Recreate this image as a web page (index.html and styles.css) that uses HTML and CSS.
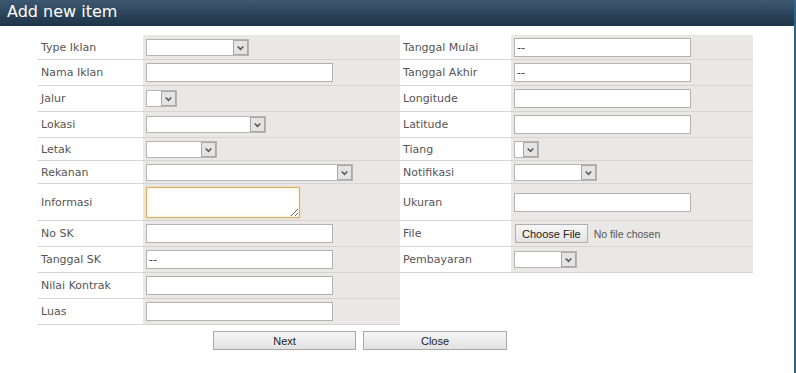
FILE: index.html
```html
<!DOCTYPE html>
<html lang="id">
<head>
  <meta charset="UTF-8">
  <meta name="viewport" content="width=device-width, initial-scale=1.0">
  <title>Add new item</title>
  <link rel="stylesheet" href="styles.css">
</head>
<body>
  <div class="dialog">
    <header class="title-bar">Add new item</header>

    <form class="form-grid">
      <div class="label">Type Iklan</div>
      <div class="field"><span class="select w103"><select></select><span class="arrow"><svg viewBox="0 0 14 14"><path d="M4 6 L7 9 L10 6"/></svg></span></span></div>
      <div class="label">Tanggal Mulai</div>
      <div class="field"><input type="text" class="text short" value="--"></div>

      <div class="label">Nama Iklan</div>
      <div class="field"><input type="text" class="text"></div>
      <div class="label">Tanggal Akhir</div>
      <div class="field"><input type="text" class="text short" value="--"></div>

      <div class="label">Jalur</div>
      <div class="field"><span class="select w31"><select></select><span class="arrow"><svg viewBox="0 0 14 14"><path d="M4 6 L7 9 L10 6"/></svg></span></span></div>
      <div class="label">Longitude</div>
      <div class="field"><input type="text" class="text short"></div>

      <div class="label">Lokasi</div>
      <div class="field"><span class="select w120"><select></select><span class="arrow"><svg viewBox="0 0 14 14"><path d="M4 6 L7 9 L10 6"/></svg></span></span></div>
      <div class="label">Latitude</div>
      <div class="field"><input type="text" class="text short"></div>

      <div class="label">Letak</div>
      <div class="field"><span class="select w71"><select></select><span class="arrow"><svg viewBox="0 0 14 14"><path d="M4 6 L7 9 L10 6"/></svg></span></span></div>
      <div class="label">Tiang</div>
      <div class="field"><span class="select w25"><select></select><span class="arrow"><svg viewBox="0 0 14 14"><path d="M4 6 L7 9 L10 6"/></svg></span></span></div>

      <div class="label">Rekanan</div>
      <div class="field"><span class="select w207"><select></select><span class="arrow"><svg viewBox="0 0 14 14"><path d="M4 6 L7 9 L10 6"/></svg></span></span></div>
      <div class="label">Notifikasi</div>
      <div class="field"><span class="select w83"><select></select><span class="arrow"><svg viewBox="0 0 14 14"><path d="M4 6 L7 9 L10 6"/></svg></span></span></div>

      <div class="label">Informasi</div>
      <div class="field"><textarea class="note"></textarea></div>
      <div class="label">Ukuran</div>
      <div class="field"><input type="text" class="text short"></div>

      <div class="label">No SK</div>
      <div class="field"><input type="text" class="text"></div>
      <div class="label">File</div>
      <div class="field"><input type="file" class="file"></div>

      <div class="label">Tanggal SK</div>
      <div class="field"><input type="text" class="text" value="--"></div>
      <div class="label">Pembayaran</div>
      <div class="field"><span class="select w63"><select></select><span class="arrow"><svg viewBox="0 0 14 14"><path d="M4 6 L7 9 L10 6"/></svg></span></span></div>

      <div class="label">Nilai Kontrak</div>
      <div class="field"><input type="text" class="text"></div>
      <div class="blank"></div>
      <div class="blank"></div>

      <div class="label">Luas</div>
      <div class="field"><input type="text" class="text"></div>
      <div class="blank"></div>
      <div class="blank"></div>
    </form>

    <div class="actions">
      <button type="button" class="btn">Next</button>
      <button type="button" class="btn">Close</button>
    </div>
  </div>
</body>
</html>
```

FILE: styles.css
```css
body {
  margin: 0;
  padding: 0;
  background-color: #ffffff;
  font-family: 'DejaVu Sans', Verdana, sans-serif;
  font-size: 11px;
  color: #555555;
}
.dialog {
  width: 796px;
  height: 373px;
  box-sizing: border-box;
  border-right: 2px solid #2c6787;
  overflow: hidden;
}
.title-bar {
  height: 26px;
  line-height: 24px;
  padding-left: 7px;
  background: linear-gradient(#3e586f, #1d3448);
  color: #ffffff;
  font-size: 16px;
}
.form-grid {
  display: grid;
  grid-template-columns: 105px 257px 111px 242px;
  grid-template-rows: 25px 26px 26px 26px 23px 23px 37px 26px 26px 26px 26px;
  width: 715px;
  margin: 9px 0 0 38px;
}
.label,
.field {
  display: flex;
  align-items: center;
  box-sizing: border-box;
  padding-left: 3px;
  border-bottom: 1px solid #d5d5d5;
}
.field {
  background-color: #e9e8e6;
}
.text {
  width: 187px;
  height: 19px;
  box-sizing: border-box;
  margin: 0;
  padding: 0 2px;
  border: 1px solid #b2b2b2;
  background: #ffffff;
  font-family: inherit;
  font-size: 11px;
  color: #333;
}
.text.short {
  width: 177px;
}
.select {
  position: relative;
  display: inline-block;
  height: 17px;
}
.select select {
  width: 100%;
  height: 17px;
  margin: 0;
  padding: 0;
  border: 1px solid #b5b5b5;
  background: #ffffff;
  appearance: none;
  -webkit-appearance: none;
}
.select .arrow {
  position: absolute;
  top: 1px;
  right: 1px;
  width: 13px;
  height: 13px;
  background: #e4e4e4;
  border: 1px solid #a9a9a9;
}
.select svg {
  display: block;
  width: 13px;
  height: 13px;
  fill: none;
  stroke: #555;
  stroke-width: 1.6;
}
.w25 { width: 25px; }
.w31 { width: 31px; }
.w63 { width: 63px; }
.w71 { width: 71px; }
.w83 { width: 83px; }
.w103 { width: 103px; }
.w120 { width: 120px; }
.w207 { width: 207px; }
.note {
  width: 154px;
  height: 31px;
  box-sizing: border-box;
  margin: 0;
  border: 1px solid #d8b066;
  box-shadow: 0 0 2px #f0d59c, inset 0 0 3px #f5e4c0;
  background: #ffffff;
  resize: both;
}
.file {
  font-family: 'Liberation Sans', Arial, sans-serif;
  font-size: 10.5px;
  color: #555;
  margin: 0 0 0 1px;
}
.file::file-selector-button {
  height: 19px;
  margin-right: 6px;
  padding: 0 6px;
  border: 1px solid #b0b0b0;
  border-radius: 0;
  background: linear-gradient(#f7f7f7, #e3e3e3);
  font-family: 'Liberation Sans', Arial, sans-serif;
  font-size: 11px;
  color: #222;
}
.blank {
  background: #ffffff;
}
.actions {
  display: flex;
  gap: 7px;
  margin: 6px 0 0 213px;
}
.btn {
  height: 19px;
  width: 143px;
  margin: 0;
  padding: 0;
  border: 1px solid #a9a9a9;
  background: linear-gradient(#f6f6f6, #e2e2e2);
  font-family: 'Liberation Sans', Arial, sans-serif;
  font-size: 11px;
  color: #222;
}
.btn + .btn {
  width: 144px;
}
```
